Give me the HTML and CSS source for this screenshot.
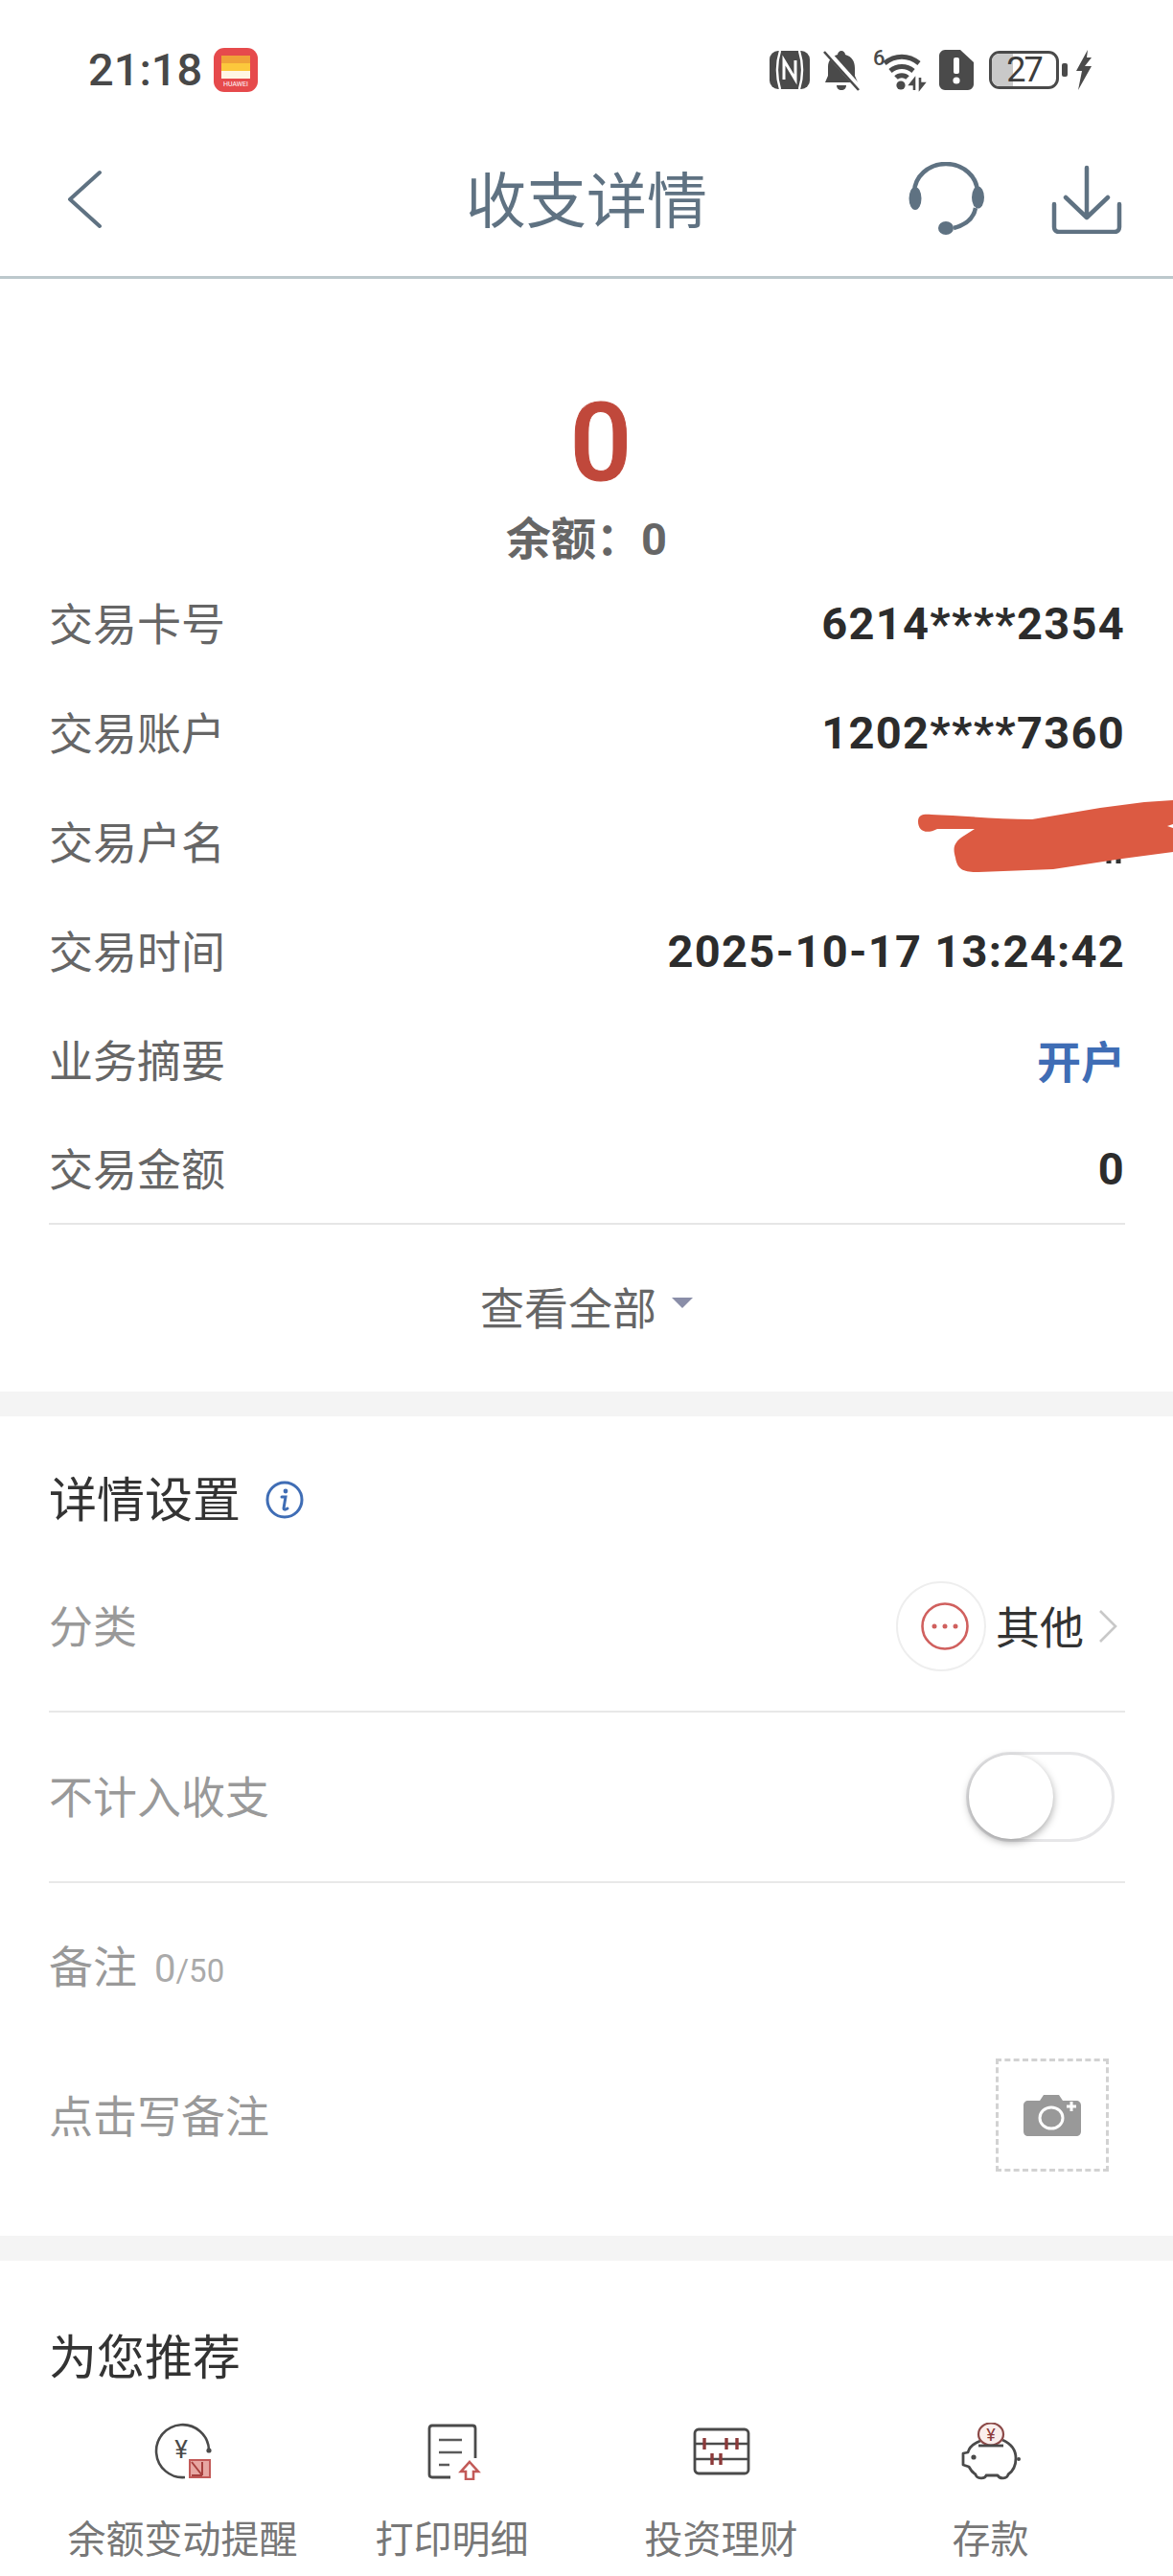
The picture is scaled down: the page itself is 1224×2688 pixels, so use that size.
FILE: index.html

```html
<!DOCTYPE html>
<html lang="zh-CN">
<head>
  <meta charset="utf-8">
  <meta name="viewport" content="width=device-width, initial-scale=1.0">
  <title>收支详情</title>
  <link rel="stylesheet" href="styles.css">
</head>
<body>
  <div class="page">
    <!-- status bar -->
    <div class="status">
      <div class="status-left">
        <span class="clock">21:18</span>
        <svg class="app-icon" width="46" height="46" viewBox="0 0 46 46">
          <rect width="46" height="46" rx="11" fill="#e64a4c"/>
          <rect x="8" y="8" width="30" height="8" fill="#f0a238"/>
          <rect x="8" y="16" width="30" height="8" fill="#fcc83c"/>
          <rect x="8" y="24" width="30" height="8" fill="#fff6e4"/>
          <text x="23" y="40" class="app-icon-text">HUAWEI</text>
        </svg>
      </div>
      <div class="status-right">
        <svg width="42" height="42" viewBox="0 0 42 42">
          <rect x="0" y="1" width="42" height="40" rx="9" fill="#4a4a4a"/>
          <path d="M11 1C7 14 7 28 11 41M31 1c4 13 4 27 0 40" fill="none" stroke="#fff" stroke-width="2.4"/>
          <path d="M15 31V11l12 20V11" fill="none" stroke="#fff" stroke-width="3"/>
        </svg>
        <svg class="gap-s" width="40" height="44" viewBox="0 0 40 44">
          <path d="M20 2c2 0 4 2 4 4 7 2 10 7 10 14v8l3 7H3l3-7v-9c0-7 4-11 10-13 0-2 2-4 4-4z" fill="#4a4a4a"/>
          <path d="M15 38h10c0 3-2 5-5 5s-5-2-5-5z" fill="#4a4a4a"/>
          <path d="M4 2l34 38" stroke="#fff" stroke-width="6"/>
          <path d="M2 3l36 40" stroke="#4a4a4a" stroke-width="2.6"/>
        </svg>
        <svg class="gap-s wifi" width="56" height="44" viewBox="0 0 56 44">
          <text x="0" y="17" class="wifi-text">6</text>
          <path d="M12 15c11-9 25-9 36 0M18 23c7-6 17-6 24 0M24 30c3-3 9-3 12 0" fill="none" stroke="#4a4a4a" stroke-width="5"/>
          <circle cx="29" cy="38" r="4.6" fill="#4a4a4a"/>
          <path d="M43 43V32l-4 5h4M49 30v11l4-5h-4" fill="none" stroke="#4a4a4a" stroke-width="2.6"/>
        </svg>
        <svg class="gap-s" width="36" height="42" viewBox="0 0 36 42">
          <path d="M6 0h16l14 13v23c0 3-3 6-6 6H6c-3 0-6-3-6-6V6c0-3 3-6 6-6z" fill="#4a4a4a"/>
          <rect x="15" y="8" width="6" height="17" rx="2" fill="#fff"/>
          <circle cx="18" cy="32" r="3.600" fill="#fff"/>
        </svg>
        <div class="battery"><span class="battery-fill"></span><span class="battery-num">27</span></div>
        <span class="battery-nub"></span>
        <svg class="bolt" width="18" height="42" viewBox="0 0 18 42">
          <path d="M13 0L1 22h6l-4 20L17 17h-7l7-9h-5z" fill="#4a4a4a"/>
        </svg>
      </div>
    </div>

    <!-- nav -->
    <div class="nav">
      <div class="nav-left">
        <svg width="36" height="62" viewBox="0 0 36 62">
          <path d="M34 3L3 31l31 28" fill="none" stroke="#5f7282" stroke-width="4" stroke-linecap="round" stroke-linejoin="round"/>
        </svg>
      </div>
      <div class="nav-title">收支详情</div>
      <div class="nav-right">
        <svg width="80" height="78" viewBox="0 0 80 78">
          <path d="M6 32a33 30 0 0 1 66 0M70 48c-2 11-11 18-23 21" fill="none" stroke="#5f7282" stroke-width="4.500"/>
          <ellipse cx="7" cy="38" rx="6.500" ry="12" fill="#5f7282"/>
          <ellipse cx="72.500" cy="37" rx="6.500" ry="11.500" fill="#5f7282"/>
          <ellipse cx="39" cy="69" rx="8" ry="7" fill="#5f7282"/>
        </svg>
        <svg class="gap-l" width="74" height="72" viewBox="0 0 74 72">
          <path d="M37 3v52M15 34l22 21 22-21M3 41v24c0 3 2 5 5 5h58c3 0 5-2 5-5V41" fill="none" stroke="#5f7282" stroke-width="4.500" stroke-linecap="round" stroke-linejoin="round"/>
        </svg>
      </div>
    </div>

    <!-- amount -->
    <div class="hero">
      <div class="hero-amount">0</div>
      <div class="hero-balance">余额：0</div>
    </div>

    <div class="details">
      <div class="detail-row"><span class="detail-label">交易卡号</span><span class="detail-value">6214****2354</span></div>
      <div class="detail-row"><span class="detail-label">交易账户</span><span class="detail-value">1202****7360</span></div>
      <div class="detail-row">
        <span class="detail-label">交易户名</span>
        <svg class="redact" width="266" height="76" viewBox="0 0 266 76">
          <path d="M199 56v10M209 56v10" stroke="#333" stroke-width="5"/>
          <path d="M0 22C0 15 6 14 14 15c30 1 70 5 105 5L190 8l46-6 30-2v25l-6 2 6 2v25l-53 7-72 11-78 3c-15 0-22-2-24-15-3-10-2-16 9-23l11-7H20C8 36 0 32 0 22z" fill="#dc5a42"/>
        </svg>
      </div>
      <div class="detail-row"><span class="detail-label">交易时间</span><span class="detail-value">2025-10-17 13:24:42</span></div>
      <div class="detail-row"><span class="detail-label">业务摘要</span><span class="detail-value detail-link">开户</span></div>
      <div class="detail-row"><span class="detail-label">交易金额</span><span class="detail-value">0</span></div>
    </div>

    <div class="more"><span>查看全部</span><span class="more-arrow"></span></div>

    <div class="band"></div>

    <!-- settings -->
    <div class="settings">
      <div class="section-title section-title-info">
        <span>详情设置</span>
        <svg width="40" height="40" viewBox="0 0 40 40">
          <circle cx="20" cy="20" r="18" fill="none" stroke="#3f6db5" stroke-width="3"/>
          <circle cx="21" cy="11" r="2.400" fill="#3f6db5"/>
          <path d="M17 17h4l-2 12c0 1 1 2 4 0" fill="none" stroke="#3f6db5" stroke-width="3" stroke-linecap="round"/>
        </svg>
      </div>
      <div class="set-row">
        <span class="set-label">分类</span>
        <div class="category">
          <div class="category-icon">
            <svg width="50" height="50" viewBox="0 0 50 50">
              <circle cx="25" cy="25" r="23.500" fill="none" stroke="#d0605e" stroke-width="2.600"/>
              <circle cx="14" cy="25" r="2.500" fill="#d0605e"/>
              <circle cx="25" cy="25" r="2.500" fill="#d0605e"/>
              <circle cx="36" cy="25" r="2.500" fill="#d0605e"/>
            </svg>
          </div>
          <span class="category-name">其他</span>
          <svg width="22" height="38" viewBox="0 0 22 38">
            <path d="M3 3l16 16L3 35" fill="none" stroke="#c8c8c8" stroke-width="2.600"/>
          </svg>
        </div>
      </div>
      <div class="set-row">
        <span class="set-label">不计入收支</span>
        <div class="toggle"><span class="toggle-thumb"></span></div>
      </div>
      <div class="note-head"><span class="set-label">备注</span><span class="note-count"><b>0</b>/50</span></div>
      <div class="note-row">
        <span class="set-label">点击写备注</span>
        <div class="photo-box">
          <svg width="60" height="44" viewBox="0 0 60 44">
            <path d="M5 7h12l4-6h16l4 6h14c3 0 5 2 5 5v27c0 3-2 5-5 5H5c-3 0-5-2-5-5V12c0-3 2-5 5-5z" fill="#999"/>
            <ellipse cx="29" cy="25" rx="12" ry="11" fill="none" stroke="#fff" stroke-width="3"/>
            <path d="M50 8v10M45 13h10" stroke="#fff" stroke-width="3"/>
          </svg>
        </div>
      </div>
    </div>

    <div class="band"></div>

    <!-- recommend -->
    <div class="recommend">
      <div class="section-title">为您推荐</div>
      <div class="tiles">
        <div class="tile">
          <svg width="60" height="60" viewBox="0 0 60 60">
            <path d="M32 57A27.500 27.500 0 1 1 57 28" fill="none" stroke="#4a4a4a" stroke-width="2.600"/>
            <circle cx="57" cy="29" r="2.600" fill="#4a4a4a"/>
            <text x="28" y="37" class="tile-yen">¥</text>
            <rect x="37" y="39" width="21" height="18" fill="#e7a7a2" stroke="#c25a58" stroke-width="2"/>
            <path d="M39 41l11 14M39 55h11M50 41v14" fill="none" stroke="#a8403e" stroke-width="2"/>
          </svg>
          <span>余额变动提醒</span>
        </div>
        <div class="tile">
          <svg width="60" height="60" viewBox="0 0 60 60">
            <path d="M28 57H9c-2 0-3-1-3-3V6c0-2 1-3 3-3h42c2 0 3 1 3 3v31" fill="none" stroke="#4a4a4a" stroke-width="2.800"/>
            <path d="M16 18h24M16 31h24M16 44h11" stroke="#5a5a5a" stroke-width="2.600"/>
            <path d="M48 41l9 10h-5v8h-8v-8h-5z" fill="#fff" stroke="#c25a58" stroke-width="2.600"/>
          </svg>
          <span>打印明细</span>
        </div>
        <div class="tile">
          <svg width="60" height="60" viewBox="0 0 60 60">
            <rect x="2" y="7" width="56" height="46" rx="4" fill="none" stroke="#4a4a4a" stroke-width="2.800"/>
            <path d="M2 22h56M2 38h56" stroke="#4a4a4a" stroke-width="2.600"/>
            <path d="M12 16v12M35 16v12M46 16v12M20 32v12M29 32v12" stroke="#8c3a3a" stroke-width="3.400"/>
          </svg>
          <span>投资理财</span>
        </div>
        <div class="tile">
          <svg width="62" height="60" viewBox="0 0 62 60">
            <path d="M20 19C12 22 8 27 7 31L2 32V44L8 46C10 50 12 52 15 54C16 59 25 59 26 55H38C40 59 48 59 49 54C55 50 57 44 57 37C57 29 52 22 43 18" fill="none" stroke="#4a4a4a" stroke-width="2.800" stroke-linejoin="round"/>
            <ellipse cx="31" cy="12" rx="13" ry="11.500" fill="#faeeec" stroke="#8c4a48" stroke-width="2.200"/>
            <path d="M18 24h26" stroke="#4a4a4a" stroke-width="2.800"/>
            <text x="31" y="19" class="tile-yen tile-yen-small">¥</text>
            <circle cx="13" cy="36" r="2.600" fill="#4a4a4a"/>
            <circle cx="60" cy="38" r="2" fill="#4a4a4a"/>
          </svg>
          <span>存款</span>
        </div>
      </div>
    </div>
  </div>
</body>
</html>
```

FILE: styles.css

```css
* {
  box-sizing: border-box;
}

html, body {
  margin: 0;
  padding: 0;
  background: #fff;
}

body {
  font-family: Roboto, "Noto Sans CJK SC", sans-serif;
}

svg {
  display: block;
  flex: none;
}

.page {
  width: 1224px;
  height: 2688px;
  overflow: hidden;
}

/* status bar */
.status {
  height: 144px;
  padding: 50px 84px 0 92px;
  display: flex;
  justify-content: space-between;
  align-items: flex-start;
}

.status-left {
  display: flex;
  align-items: center;
  height: 45px;
}

.clock {
  font-size: 47px;
  line-height: 45px;
  font-weight: 500;
  color: #484848;
}

.app-icon {
  margin-left: 12px;
}

.app-icon-text {
  font-family: Roboto, sans-serif;
  font-size: 7px;
  fill: #fff;
  text-anchor: middle;
}

.status-right {
  display: flex;
  align-items: center;
  height: 45px;
}

.wifi {
  overflow: visible;
}

.wifi-text {
  font-family: Roboto, sans-serif;
  font-size: 22px;
  font-weight: 500;
  fill: #4a4a4a;
}

.gap-s {
  margin-left: 13px;
}

.battery {
  width: 73px;
  height: 40px;
  margin-left: 16px;
  border: 3px solid #4a4a4a;
  border-radius: 11px;
  position: relative;
  display: flex;
  align-items: center;
  justify-content: center;
}

.battery-fill {
  position: absolute;
  left: 0;
  top: 0;
  bottom: 0;
  width: 22px;
  border-radius: 8px 0 0 8px;
  background: #c9c9c9;
}

.battery-num {
  position: relative;
  font-size: 36px;
  line-height: 34px;
  letter-spacing: -2px;
  color: #3c3c3c;
}

.battery-nub {
  width: 6px;
  height: 14px;
  margin-left: 3px;
  border-radius: 2px;
  background: #4a4a4a;
}

.bolt {
  margin-left: 8px;
}

/* nav */
.nav {
  height: 147px;
  padding: 0 53px 16px;
  border-bottom: 3px solid #bcc8cc;
  display: grid;
  grid-template-columns: 1fr auto 1fr;
  align-items: center;
}

.nav-left {
  padding-left: 17px;
}

.nav-title {
  padding-top: 6px;
  font-size: 63px;
  line-height: 80px;
  color: #5f7282;
}

.nav-right {
  display: flex;
  justify-content: flex-end;
  align-items: center;
}

.gap-l {
  margin-left: 69px;
}

/* amount */
.hero {
  height: 303px;
  padding-top: 110px;
  display: flex;
  flex-direction: column;
  align-items: center;
  gap: 10px;
}

.hero-amount {
  margin-left: 30px;
  font-size: 114px;
  line-height: 122px;
  font-weight: 500;
  color: #c0483b;
  -webkit-text-stroke: 1px #c0483b;
}

.hero-balance {
  font-size: 47px;
  line-height: 60px;
  font-weight: 700;
  color: #666;
}

/* detail rows */
.details {
  margin: 0 50px 0 51px;
  border-bottom: 2px solid #e6e6e6;
}

.detail-row {
  height: 114px;
  display: flex;
  justify-content: space-between;
  align-items: center;
  position: relative;
}

.detail-row:last-child {
  height: 112px;
}

.detail-label {
  padding-bottom: 6px;
  font-size: 46px;
  color: #666;
}

.detail-value {
  padding-bottom: 1px;
  font-size: 47px;
  font-weight: 700;
  color: #2c2c2c;
  letter-spacing: 1.3px;
}

.detail-link {
  padding-bottom: 4px;
  color: #3f6db5;
  font-size: 46px;
  letter-spacing: 0;
}

.redact {
  position: absolute;
  right: -50px;
  top: 13px;
}

.more {
  height: 174px;
  padding-bottom: 7px;
  display: flex;
  justify-content: center;
  align-items: center;
  font-size: 46px;
  color: #666;
}

.more-arrow {
  width: 0;
  height: 0;
  margin-left: 16px;
  margin-top: -4px;
  border-left: 11px solid transparent;
  border-right: 11px solid transparent;
  border-top: 11px solid #8a8ea8;
}

.band {
  height: 26px;
  background: #f4f4f4;
}

/* settings */
.settings {
  padding: 43px 50px 67px 51px;
}

.section-title {
  font-size: 50px;
  line-height: 54px;
  color: #333;
}

.section-title-info {
  height: 88px;
  display: flex;
  align-items: center;
  gap: 26px;
}

.section-title-info span {
  padding-top: 2px;
}

.set-row {
  height: 178px;
  border-bottom: 2px solid #e8e8e8;
  display: flex;
  justify-content: space-between;
  align-items: center;
}

.set-label {
  padding-top: 1px;
  font-size: 46px;
  line-height: 54px;
  color: #999;
}

.category {
  display: flex;
  align-items: center;
}

.category-icon {
  width: 94px;
  height: 94px;
  border: 2px solid #eee;
  border-radius: 50%;
  display: flex;
  align-items: center;
  justify-content: center;
}

.category-name {
  margin-left: 10px;
  padding-bottom: 4px;
  font-size: 46px;
  color: #333;
}

.category svg:last-child {
  margin-left: 14px;
  margin-right: 7px;
}

.toggle {
  width: 155px;
  height: 94px;
  margin-right: 11px;
  border: 3px solid #e6e6e8;
  border-radius: 47px;
  position: relative;
}

.toggle-thumb {
  position: absolute;
  left: 0;
  top: 0;
  width: 88px;
  height: 88px;
  border-radius: 50%;
  background: #fff;
  box-shadow: 0 3px 8px rgba(0, 0, 0, 0.35);
}

.note-head {
  margin-top: 60px;
  display: flex;
  align-items: center;
  gap: 18px;
}

.note-count {
  padding-top: 3px;
  font-size: 33px;
  color: #aaa;
}

.note-count b {
  font-size: 40px;
  font-weight: 400;
}

.note-row {
  margin-top: 68px;
  height: 118px;
  display: flex;
  justify-content: space-between;
  align-items: center;
}

.note-row .set-label {
  padding-top: 3px;
}

.photo-box {
  width: 118px;
  height: 118px;
  margin-right: 17px;
  border: 3px dashed #d2d2d2;
  display: flex;
  align-items: center;
  justify-content: center;
}

/* recommend */
.recommend {
  padding: 72px 0 0;
}

.recommend .section-title {
  padding-left: 51px;
  padding-top: 3px;
  margin-bottom: -3px;
}

.tiles {
  margin-top: 43px;
  padding: 0 50px;
  display: grid;
  grid-template-columns: repeat(4, 281px);
}

.tile {
  display: flex;
  flex-direction: column;
  align-items: center;
  gap: 38px;
  font-size: 40px;
  line-height: 50px;
  color: #777;
}

.tile-yen {
  font-family: Roboto, sans-serif;
  font-size: 26px;
  fill: #4a4a4a;
  text-anchor: middle;
}

.tile-yen-small {
  font-size: 18px;
  fill: #8c3a3a;
}
```
